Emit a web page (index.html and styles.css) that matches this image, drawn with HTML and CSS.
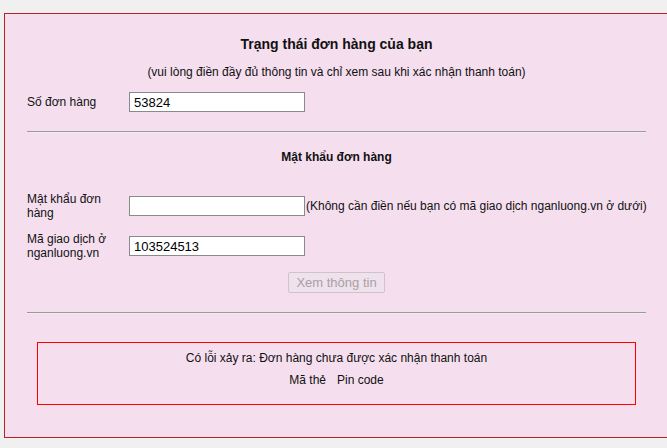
FILE: index.html
```html
<!DOCTYPE html>
<html lang="vi">
<head>
  <meta charset="UTF-8" />
  <title>Trạng thái đơn hàng</title>
  <link rel="stylesheet" href="styles.css">
</head>
<body>
  <div class="khung">
    <h2 class="tieu-de">Trạng thái đơn hàng của bạn</h2>
    <p class="ghi-chu">(vui lòng điền đầy đủ thông tin và chỉ xem sau khi xác nhận thanh toán)</p>

    <div class="dong dong-dau">
      <label class="nhan">Số đơn hàng</label>
      <input class="o-nhap" type="text" value="53824" />
    </div>

    <hr class="ke" />

    <h3 class="muc">Mật khẩu đơn hàng</h3>

    <div class="dong dong-mk">
      <label class="nhan">Mật khẩu đơn hàng</label>
      <input class="o-nhap" type="password" />
      <span class="phu">(Không cần điền nếu bạn có mã giao dịch nganluong.vn ở dưới)</span>
    </div>

    <div class="dong">
      <label class="nhan">Mã giao dịch ở nganluong.vn</label>
      <input class="o-nhap" type="text" value="103524513" />
    </div>

    <div class="nut-dong">
      <button class="nut" disabled>Xem thông tin</button>
    </div>

    <hr class="ke ke-duoi" />

    <div class="loi">
      <p>Có lỗi xảy ra: Đơn hàng chưa được xác nhận thanh toán</p>
      <p class="the"><span>Mã thẻ</span><span>Pin code</span></p>
    </div>
  </div>
</body>
</html>
```

FILE: styles.css
```css
* {
  box-sizing: border-box;
}
html, body {
  margin: 0;
  background: #f0f0f0;
  font-family: "Liberation Sans", Arial, sans-serif;
  font-size: 12px;
  color: #111;
  overflow: hidden;
}

.khung {
  margin: 13px 0 0 4px;
  width: 665px;
  background: #f5dfef;
  border: 1px solid #b42323;
  padding: 22px 22px 32px 22px;
}

.tieu-de {
  margin: 0;
  text-align: center;
  font-size: 14px;
  line-height: 16px;
  font-weight: bold;
}

.ghi-chu {
  margin: 13px 0 0;
  text-align: center;
  line-height: 14px;
}

.dong {
  display: flex;
  align-items: center;
  margin-top: 12px;
  min-height: 28px;
}
.dong-dau {
  margin-top: 9px;
}
.dong-mk {
  margin-top: 28px;
}

.nhan {
  width: 102px;
  flex-shrink: 0;
  line-height: 14px;
  padding-right: 10px;
}

.o-nhap {
  width: 176px;
  height: 20px;
  margin: 0;
  padding: 1px 4px;
  border: 1px solid #8a8a8a;
  background: #fff;
  font-family: "Liberation Sans", Arial, sans-serif;
  font-size: 13px;
  color: #000;
}

.phu {
  padding-left: 1px;
  white-space: nowrap;
}

.ke {
  margin: 15px 0 0;
  height: 2px;
  border: none;
  border-top: 1px solid #9a9a9a;
  border-bottom: 1px solid #eee;
}

.muc {
  margin: 17px 0 0;
  text-align: center;
  font-size: 12px;
  line-height: 14px;
  font-weight: bold;
}

.nut-dong {
  display: flex;
  justify-content: center;
  margin-top: 12px;
}
.nut {
  width: 97px;
  height: 21px;
  padding: 0;
  font-family: "Liberation Sans", Arial, sans-serif;
  font-size: 13px;
  color: #a8a0a6;
  background: #f0e2ec;
  border: 1px solid #cfc3cb;
  border-radius: 2px;
}

.ke-duoi {
  margin-top: 19px;
}

.loi {
  margin: 28px 10px 0;
  border: 1px solid #ff0000;
  padding: 8px 0 17px;
  text-align: center;
}
.loi p {
  margin: 0;
  line-height: 14px;
}
.loi .the {
  margin-top: 8px;
}
.the span + span {
  margin-left: 11px;
}
```
